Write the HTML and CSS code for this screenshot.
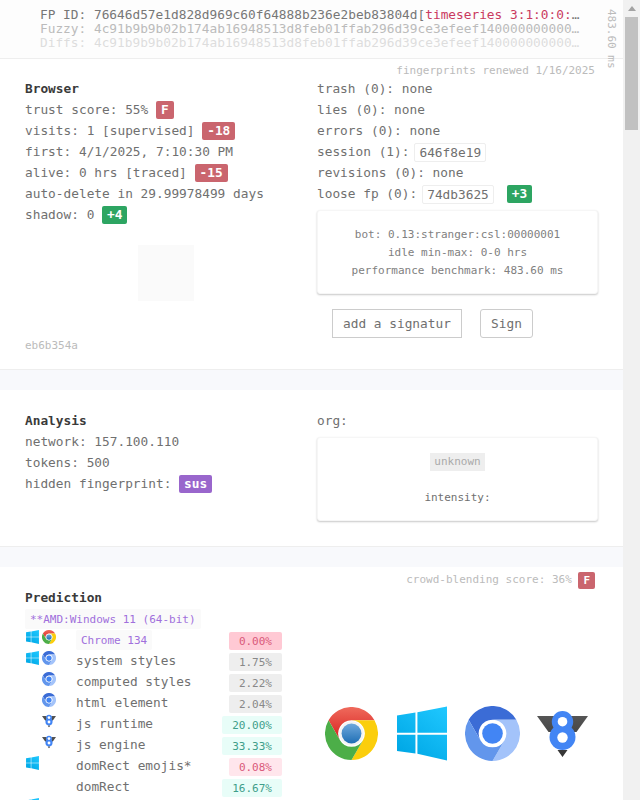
FILE: index.html
```html
<!DOCTYPE html>
<html lang="en">
<head>
<meta charset="utf-8">
<title>Fingerprint</title>
<link rel="stylesheet" href="styles.css">
</head>
<body>
<svg class="defs" width="0" height="0" aria-hidden="true">
  <defs>
    <linearGradient id="gblue" x1="0" y1="0" x2="0" y2="1"><stop offset="0" stop-color="#6fa8dc"/><stop offset="1" stop-color="#1f6fb5"/></linearGradient>
    <linearGradient id="gred" x1="0" y1="0" x2="0" y2="1"><stop offset="0" stop-color="#ef6a5c"/><stop offset="1" stop-color="#d8201f"/></linearGradient>
    <linearGradient id="gwin" x1="1" y1="0" x2="0.3" y2="1"><stop offset="0" stop-color="#20c8ff"/><stop offset="1" stop-color="#00a8e6"/></linearGradient>
    <linearGradient id="gwing" x1="0" y1="0" x2="0" y2="1"><stop offset="0" stop-color="#555"/><stop offset="1" stop-color="#333"/></linearGradient>
    <symbol id="chrome" viewBox="0 0 48 48">
      <path fill="url(#gred)" d="M3.2 12A24 24 0 0 1 44.8 12H24A12 12 0 0 0 13.6 30Z"/>
      <path fill="#fbce0c" d="M44.8 12A24 24 0 0 1 24 48L34.4 30A12 12 0 0 0 24 12Z"/>
      <path fill="#4cae48" d="M24 48A24 24 0 0 1 3.2 12L13.6 30A12 12 0 0 0 34.4 30Z"/>
      <circle cx="24" cy="24" r="11" fill="#f4f4f4"/>
      <circle cx="24" cy="24" r="9" fill="url(#gblue)"/>
    </symbol>
    <symbol id="chromium" viewBox="0 0 48 48">
      <path fill="#3b6cd6" d="M3.2 12A24 24 0 0 1 44.8 12H24A12 12 0 0 0 13.6 30Z"/>
      <path fill="#a3c3fa" d="M44.8 12A24 24 0 0 1 24 48L34.4 30A12 12 0 0 0 24 12Z"/>
      <path fill="#6296ec" d="M24 48A24 24 0 0 1 3.2 12L13.6 30A12 12 0 0 0 34.4 30Z"/>
      <circle cx="24" cy="24" r="11" fill="#fff"/>
      <circle cx="24" cy="24" r="9" fill="#4285f4"/>
    </symbol>
    <symbol id="windows" viewBox="0 0 50.7 55">
      <path fill="url(#gwin)" d="M0 9.3 18.7 6.3V26.7H0ZM20.7 6 50.7 0V26.7H20.7ZM0 28.700H18.700V47.700L0 45.300ZM20.700 28.700H50.700V55L20.700 48Z"/>
    </symbol>
    <symbol id="v8" viewBox="0 0 51 46">
      <path fill="url(#gwing)" d="M0 5H17V21H11.500ZM51 5H34V21H39.500ZM20.500 39H30.500L25.500 46Z"/>
      <circle cx="25.500" cy="10.700" r="10.700" fill="#4285f4"/>
      <circle cx="25.500" cy="26" r="13" fill="#4285f4"/>
      <circle cx="25.500" cy="10.700" r="4.800" fill="#fff"/>
      <circle cx="25.500" cy="26.500" r="5.200" fill="#fff"/>
    </symbol>
  </defs>
</svg>
<div class="window">
  <main class="page">
    <header class="ids">
      <div class="id-line id-main">FP ID: 76646d57e1d828d969c60f64888b236e2beb83804d[<span class="series">timeseries 3:1:0:0:0:0:1:0:0:0]</span></div>
      <div class="id-line id-fuzzy">Fuzzy: 4c91b9b9b02b174ab16948513d8feb01ffab296d39ce3efeef1400000000000000000</div>
      <div class="id-line id-diffs">Diffs: 4c91b9b9b02b174ab16948513d8feb01ffab296d39ce3efeef1400000000000000000</div>
      <div class="perf">483.60 ms</div>
    </header>

    <section class="panel panel-browser">
      <div class="note">fingerprints renewed 1/16/2025</div>
      <div class="cols">
        <div>
          <div class="heading">Browser</div>
          <div class="row">trust score: 55% <span class="badge bad">F</span></div>
          <div class="row">visits: 1 [supervised] <span class="badge bad">-18</span></div>
          <div class="row">first: 4/1/2025, 7:10:30 PM</div>
          <div class="row">alive: 0 hrs [traced] <span class="badge bad">-15</span></div>
          <div class="row">auto-delete in 29.99978499 days</div>
          <div class="row">shadow: 0 <span class="badge good">+4</span></div>
          <div class="avatar"></div>
          <div class="hash">eb6b354a</div>
        </div>
        <div>
          <div class="row">trash (0): none</div>
          <div class="row">lies (0): none</div>
          <div class="row">errors (0): none</div>
          <div class="row">session (1):<span class="chip">646f8e19</span></div>
          <div class="row">revisions (0): none</div>
          <div class="row">loose fp (0):<span class="chip">74db3625</span><span class="badge good chip-badge">+3</span></div>
          <div class="card card-bot">
            <div class="card-line">bot: 0.13:stranger:csl:00000001</div>
            <div class="card-line">idle min-max: 0-0 hrs</div>
            <div class="card-line">performance benchmark: 483.60 ms</div>
          </div>
          <form class="sign">
            <input class="sign-input" type="text" value="add a signature" aria-label="signature">
            <button class="sign-button" type="button">Sign</button>
          </form>
        </div>
      </div>
    </section>

    <div class="gap"></div>

    <section class="panel panel-analysis">
      <div class="cols">
        <div>
          <div class="heading">Analysis</div>
          <div class="row">network: 157.100.110</div>
          <div class="row">tokens: 500</div>
          <div class="row">hidden fingerprint: <span class="badge sus">sus</span></div>
        </div>
        <div>
          <div class="row">org:</div>
          <div class="card card-org">
            <div class="unknown-wrap"><span class="unknown">unknown</span></div>
            <div class="intensity">intensity:</div>
          </div>
        </div>
      </div>
    </section>

    <div class="gap"></div>

    <section class="panel panel-prediction">
      <div class="note note-score">crowd-blending score: 36% <span class="badge bad small">F</span></div>
      <div class="predict">
        <div class="predict-list">
          <div class="heading">Prediction</div>
          <div class="tag-line"><span class="tag">**AMD:Windows 11 (64-bit)</span></div>
          <div class="p-row">
            <div class="p-icons"><svg class="ico-win"><use href="#windows"/></svg><svg class="ico"><use href="#chrome"/></svg></div>
            <div><span class="tag">Chrome 134</span></div>
            <span class="pct pct-red">0.00%</span>
          </div>
          <div class="p-row">
            <div class="p-icons"><svg class="ico-win"><use href="#windows"/></svg><svg class="ico"><use href="#chromium"/></svg></div>
            <div>system styles</div>
            <span class="pct pct-gray">1.75%</span>
          </div>
          <div class="p-row">
            <div class="p-icons"><span class="ico-win"></span><svg class="ico"><use href="#chromium"/></svg></div>
            <div>computed styles</div>
            <span class="pct pct-gray">2.22%</span>
          </div>
          <div class="p-row">
            <div class="p-icons"><span class="ico-win"></span><svg class="ico"><use href="#chromium"/></svg></div>
            <div>html element</div>
            <span class="pct pct-gray">2.04%</span>
          </div>
          <div class="p-row">
            <div class="p-icons"><span class="ico-win"></span><svg class="ico"><use href="#v8"/></svg></div>
            <div>js runtime</div>
            <span class="pct pct-teal">20.00%</span>
          </div>
          <div class="p-row">
            <div class="p-icons"><span class="ico-win"></span><svg class="ico"><use href="#v8"/></svg></div>
            <div>js engine</div>
            <span class="pct pct-teal">33.33%</span>
          </div>
          <div class="p-row">
            <div class="p-icons"><svg class="ico-win"><use href="#windows"/></svg></div>
            <div>domRect emojis*</div>
            <span class="pct pct-pink">0.08%</span>
          </div>
          <div class="p-row">
            <div class="p-icons"></div>
            <div>domRect</div>
            <span class="pct pct-teal">16.67%</span>
          </div>
          <div class="p-row">
            <div class="p-icons"><svg class="ico-win"><use href="#windows"/></svg></div>
            <div>svg emojis</div>
            <span class="pct pct-pink">0.08%</span>
          </div>
        </div>
        <div class="logos">
          <svg class="logo-chrome"><use href="#chrome"/></svg>
          <svg class="logo-win"><use href="#windows"/></svg>
          <svg class="logo-chromium"><use href="#chromium"/></svg>
          <svg class="logo-v8"><use href="#v8"/></svg>
        </div>
      </div>
    </section>
  </main>
  <aside class="scrollbar" aria-hidden="true">
    <div class="scroll-up"></div>
    <div class="scroll-thumb"></div>
  </aside>
</div>
</body>
</html>
```

FILE: styles.css
```css
* { box-sizing: border-box; }

html, body {
  margin: 0;
  height: 800px;
  overflow: hidden;
  background: #fff;
}

body {
  font-family: "DejaVu Sans Mono", "Liberation Mono", monospace;
  font-size: 12.8px;
  line-height: 21px;
  color: #707070;
}

.defs { position: absolute; }

.window {
  display: flex;
  height: 800px;
  overflow: hidden;
}

.page {
  width: 623px;
  flex: none;
}

/* fake native scrollbar */
.scrollbar {
  width: 17px;
  flex: none;
  background: #f1f1f1;
  padding: 6px 2px 0;
}
.scroll-up {
  width: 0;
  height: 0;
  margin: 0 auto 6px;
  border-left: 4px solid transparent;
  border-right: 4px solid transparent;
  border-bottom: 5px solid #a3a3a3;
}
.scroll-thumb {
  height: 113px;
  background: #c1c1c1;
}

/* header */
.ids {
  position: relative;
  height: 59px;
  padding: 8px 43px 0 40px;
  background: #fdfdfd;
  border-bottom: 1px solid #eee;
}
.id-line {
  line-height: 14px;
  white-space: nowrap;
  overflow: hidden;
  text-overflow: ellipsis;
}
.id-main { color: #777; }
.id-fuzzy { color: #bbb; }
.id-diffs { color: #ddd; }
.series { color: #ca3a5f; }
.perf {
  position: absolute;
  top: 9px;
  right: 5px;
  writing-mode: vertical-rl;
  white-space: nowrap;
  font-size: 11px;
  line-height: 14px;
  color: #bbb;
}

/* panels */
.panel { background: #fff; border-bottom: 1px solid #eee; padding: 0 25px; }
.panel-browser { height: 311px; padding-top: 4px; }
.panel-analysis { height: 157px; padding-top: 20px; }
.panel-prediction { border-bottom: 0; padding-top: 5px; }
.gap { height: 20px; background: #f8f9fc; }

.cols {
  display: grid;
  grid-template-columns: 281px 281px;
  column-gap: 11px;
}

.note {
  height: 15px;
  padding-right: 3px;
  font-size: 11px;
  line-height: 15px;
  text-align: right;
  color: #bbb;
}

.heading { height: 21px; font-weight: 600; color: #3a3a3a; }
.row { height: 21px; white-space: nowrap; }

.badge {
  display: inline-block;
  height: 18px;
  padding: 0 5px;
  border-radius: 2px;
  line-height: 18px;
  color: #fff;
  font-weight: 600;
  vertical-align: top;
  margin-top: 2px;
}
.bad { background: #ca656e; }
.good { background: #2da562; }
.sus { background: #9966cc; }
.badge.small {
  height: 17px;
  padding: 0 5px;
  font-size: 11px;
  line-height: 17px;
  margin-top: 0;
}

.chip {
  display: inline-block;
  height: 19px;
  margin: 2px 0 0 5px;
  padding: 0 4px;
  border: 1px solid #eee;
  border-radius: 2px;
  line-height: 17px;
  vertical-align: top;
}
.chip-badge { margin-left: 13px; }

.avatar {
  width: 56px;
  height: 56px;
  margin: 20px auto 0;
  background: #fafafa;
}
.hash {
  margin-top: 38px;
  font-size: 11px;
  line-height: 14px;
  color: #bbb;
}

.card {
  height: 84px;
  padding-top: 15px;
  border-radius: 3px;
  background: #fff;
  border: 1px solid #f6f6f6;
  box-shadow: 0 1px 2px rgba(0, 0, 0, .22);
  text-align: center;
  font-size: 11px;
  line-height: 18px;
}
.card-bot { margin-top: 6px; }
.card-org { margin-top: 6px; }
.card-line { color: #808080; }

.unknown-wrap { height: 18px; }
.unknown {
  display: inline-block;
  padding: 0 4px;
  background: #eee;
  color: #aaa;
}
.intensity { margin-top: 18px; color: #707070; }

.sign {
  display: flex;
  gap: 18px;
  margin: 15px 0 0 15px;
}
.sign-input, .sign-button {
  height: 29px;
  padding: 0 10px;
  background: #fff;
  font: 12.8px "DejaVu Sans Mono", "Liberation Mono", monospace;
  color: #707070;
  outline: none;
}
.sign-input { width: 130px; border: 1px solid #ccc; border-radius: 0; }
.sign-button { width: 53px; border: 1px solid #ccc; border-radius: 3px; }

/* prediction */
.predict {
  display: grid;
  grid-template-columns: 257px 1fr;
}
.tag-line { height: 20px; margin: 1px 0; }
.tag {
  display: inline-block;
  height: 20px;
  padding: 0 5px;
  border-radius: 2px;
  background: #fafafa;
  color: #a06fdc;
  font-size: 11px;
  line-height: 22px;
  vertical-align: top;
}

.p-row {
  display: grid;
  grid-template-columns: 51px 1fr auto;
  height: 21px;
  line-height: 19px;
  white-space: nowrap;
}
.p-icons { display: flex; gap: 3px; padding-left: 1px; }
.ico-win { display: block; width: 13px; height: 14px; flex: none; }
.ico { display: block; width: 14px; height: 14px; flex: none; }

.pct {
  height: 18px;
  margin-top: 2px;
  padding: 0 10px;
  border-radius: 2px;
  font-size: 11px;
  line-height: 20px;
}
.pct-red { background: #ffc9d4; color: #d9597a; }
.pct-pink { background: #ffe6ec; color: #d9597a; }
.pct-gray { background: #eee; color: #888; }
.pct-teal { background: #e8fdf8; color: #3f9e8a; }

.logos {
  display: flex;
  align-items: center;
  align-self: start;
  gap: 18px;
  height: 55px;
  margin: 119px 0 0 43px;
}
.logo-chrome { width: 53px; height: 53px; }
.logo-win { width: 50px; height: 55px; margin-left: 1px; }
.logo-chromium { width: 55px; height: 55px; }
.logo-v8 { width: 51px; height: 46px; margin-left: -1px; }
```
